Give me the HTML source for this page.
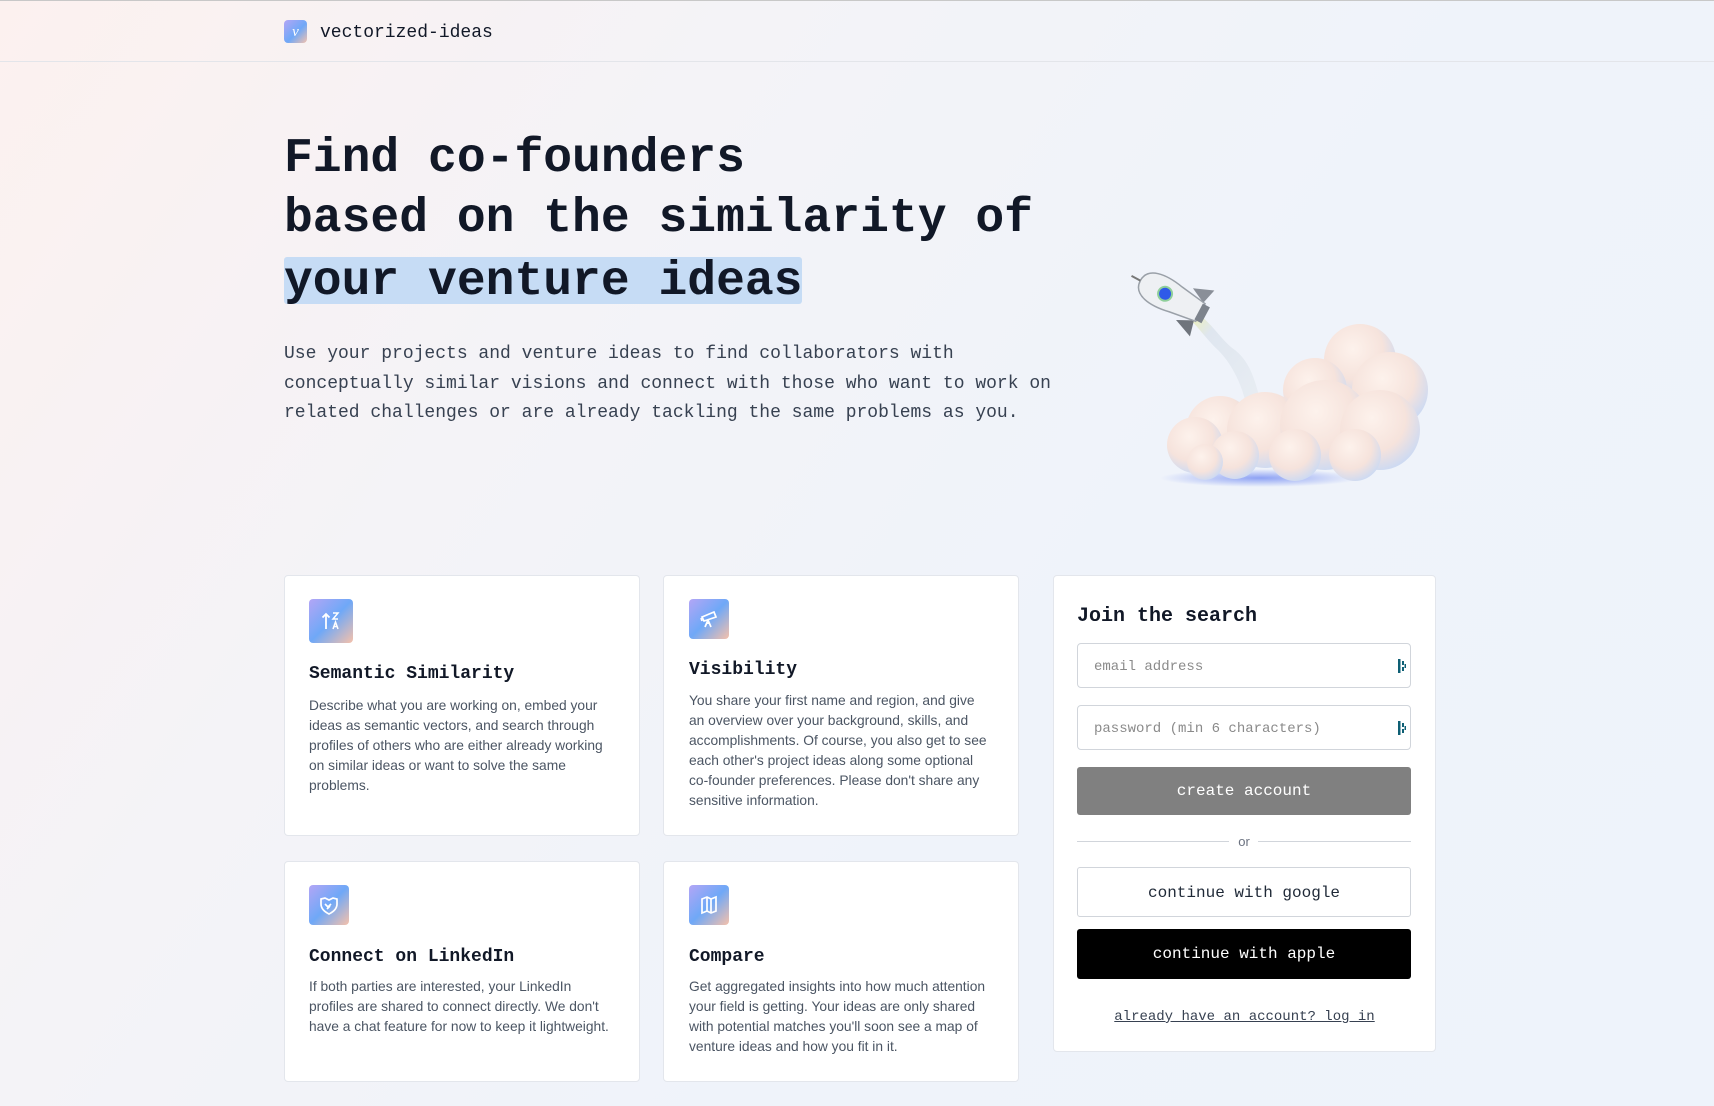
<!DOCTYPE html>
<html><head><meta charset="utf-8">
<style>
*{margin:0;padding:0;box-sizing:border-box}
html,body{width:1714px;height:1106px;overflow:hidden}
body{position:relative;font-family:"Liberation Mono",monospace;color:#111827;
background:linear-gradient(125deg,#fcf1ef 0%,#f4f3f7 30%,#eff3fa 60%,#eef3fb 100%);}
.abs{position:absolute}
.topline{left:0;top:0;width:1714px;height:1px;background:#c8c8c8}
.hdr{left:0;top:61px;width:1714px;height:1px;background:#e3e5ea}
.logo{left:284px;top:20px;width:23px;height:23px;border-radius:4px;background:linear-gradient(135deg,#b3a6f6,#6fa8f7 55%,#f4c2ad);color:#fff;font:italic 15px "Liberation Serif",serif;text-align:center;line-height:24px}
.brand{left:320px;top:20px;font-size:18px;line-height:26px;color:#111827}
.h1{left:284px;font-weight:bold;font-size:48px;line-height:60px;color:#111827;white-space:pre}
.hl{left:284px;top:257px;width:518px;height:47px;background:#c6dcf5;border-radius:3px}
.p{left:284px;top:340px;font-size:18px;line-height:29.5px;color:#374151;white-space:pre}
.card{background:#fff;border:1px solid #e3e6ec;border-radius:4px}
.ic{border-radius:4px;background:linear-gradient(135deg,#b3a6f6 0%,#6fa8f7 50%,#f6c1aa 100%);display:flex;align-items:center;justify-content:center}
.ct{font-size:18px;font-weight:bold;color:#111827;line-height:22px;white-space:pre}
.cb{font-family:"Liberation Sans",sans-serif;font-size:13.8px;line-height:20px;color:#4b5563}
.inp{left:1077px;width:334px;height:45px;border:1px solid #d1d5db;border-radius:4px;background:#fff;font-size:14px;color:#8a8a8a;padding-left:16px;line-height:46px}
.pm{position:absolute;right:4px;top:15px;width:8px;height:14px}
.btn{left:1077px;width:334px;border-radius:3px;text-align:center;font-size:16px}
</style></head><body>
<div class="abs topline"></div>
<div class="abs logo">ν</div>
<div class="abs brand">vectorized-ideas</div>
<div class="abs hdr"></div>

<div class="abs hl"></div>
<div class="abs h1" style="top:129px">Find co-founders</div>
<div class="abs h1" style="top:189px">based on the similarity of</div>
<div class="abs h1" style="top:252px">your venture ideas</div>
<div class="abs p">Use your projects and venture ideas to find collaborators with
conceptually similar visions and connect with those who want to work on
related challenges or are already tackling the same problems as you.</div>

<svg class="abs" style="left:1110px;top:250px" width="330" height="250" viewBox="0 0 330 250">
<defs>
<radialGradient id="cl" cx="40%" cy="35%" r="70%"><stop offset="0" stop-color="#fdf2ec"/><stop offset=".6" stop-color="#f6e3dc"/><stop offset="1" stop-color="#c9d9f4"/></radialGradient>
<radialGradient id="sh" cx="50%" cy="50%" r="50%"><stop offset="0" stop-color="#4d6cf0" stop-opacity=".6"/><stop offset="1" stop-color="#4d6cf0" stop-opacity="0"/></radialGradient>
<linearGradient id="tr" x1="0" y1="0" x2="1" y2="1"><stop offset="0" stop-color="#f4f6a0"/><stop offset=".3" stop-color="#dfe6ef"/><stop offset="1" stop-color="#e8edf3"/></linearGradient>
</defs>
<ellipse cx="150" cy="228" rx="100" ry="9" fill="url(#sh)"/>
<path d="M78 58 C100 68 110 90 125 100 C140 112 145 130 150 150 L135 150 C130 130 120 112 108 100 C95 88 85 72 74 64Z" fill="url(#tr)"/>
<g fill="url(#cl)">
<circle cx="250" cy="110" r="36"/><circle cx="280" cy="140" r="38"/><circle cx="205" cy="140" r="32"/>
<circle cx="110" cy="180" r="34"/><circle cx="85" cy="195" r="28"/><circle cx="155" cy="180" r="38"/>
<circle cx="215" cy="175" r="45"/><circle cx="270" cy="180" r="40"/><circle cx="125" cy="205" r="24"/>
<circle cx="185" cy="205" r="26"/><circle cx="95" cy="212" r="18"/><circle cx="245" cy="205" r="26"/>
</g>
<g transform="translate(48,40) rotate(28)">
<path d="M30 -18 L50 -26 L46 -10Z" fill="#8a8f98"/>
<path d="M30 18 L50 26 L46 10Z" fill="#6f747c"/>
<path d="M-20 0 C-20 -16 0 -18 20 -14 L48 -10 L48 10 L20 14 C0 18 -20 16 -20 0Z" fill="#eef0f3" stroke="#9aa0a8" stroke-width="1.5"/>
<rect x="46" y="-9" width="8" height="18" fill="#7d838c"/>
<circle cx="8" cy="0" r="7" fill="#2f5ae8" stroke="#8fcf9a" stroke-width="2"/>
<line x1="-20" y1="0" x2="-30" y2="0" stroke="#777" stroke-width="2"/>
</g>
</svg>

<div class="abs card" style="left:284px;top:575px;width:356px;height:261px"></div>
<div class="abs ic" style="left:309px;top:599px;width:44px;height:44px">
<svg width="22" height="22" viewBox="0 0 22 22" fill="none" stroke="#fff" stroke-width="1.8"><path d="M6 19V4M2.5 7.5L6 4l3.5 3.5"/><path d="M13 3h5l-5 6h5M13 19l2.5-7 2.5 7M14 16.5h3" stroke-width="1.5"/></svg></div>
<div class="abs ct" style="left:309px;top:663px">Semantic Similarity</div>
<div class="abs cb" style="left:309px;top:696px;width:300px">Describe what you are working on, embed your ideas as semantic vectors, and search through profiles of others who are either already working on similar ideas or want to solve the same problems.</div>

<div class="abs card" style="left:663px;top:575px;width:356px;height:261px"></div>
<div class="abs ic" style="left:689px;top:599px;width:40px;height:40px">
<svg width="22" height="22" viewBox="0 0 22 22" fill="none" stroke="#fff" stroke-width="1.7"><path d="M4 9l12-5 2 5-12 4z"/><path d="M3 10l1 3"/><path d="M10 12l-3 7M10 12l3 7M10 12v4"/></svg></div>
<div class="abs ct" style="left:689px;top:659px">Visibility</div>
<div class="abs cb" style="left:689px;top:691px;width:300px">You share your first name and region, and give an overview over your background, skills, and accomplishments. Of course, you also get to see each other's project ideas along some optional co-founder preferences. Please don't share any sensitive information.</div>

<div class="abs card" style="left:284px;top:861px;width:356px;height:221px"></div>
<div class="abs ic" style="left:309px;top:885px;width:40px;height:40px">
<svg width="22" height="22" viewBox="0 0 22 22" fill="none" stroke="#fff" stroke-width="1.7"><path d="M3 5l4-1 4 2 4-2 4 1v5c0 5-4 8-8 10-4-2-8-5-8-10z"/><path d="M7 10l3 3 3-3M9 15l3-3"/></svg></div>
<div class="abs ct" style="left:309px;top:946px">Connect on LinkedIn</div>
<div class="abs cb" style="left:309px;top:977px;width:305px">If both parties are interested, your LinkedIn profiles are shared to connect directly. We don't have a chat feature for now to keep it lightweight.</div>

<div class="abs card" style="left:663px;top:861px;width:356px;height:221px"></div>
<div class="abs ic" style="left:689px;top:885px;width:40px;height:40px">
<svg width="22" height="22" viewBox="0 0 22 22" fill="none" stroke="#fff" stroke-width="1.7"><path d="M4 5l5-2 4 2 5-2v14l-5 2-4-2-5 2z"/><path d="M9 3v14M13 5v14"/></svg></div>
<div class="abs ct" style="left:689px;top:946px">Compare</div>
<div class="abs cb" style="left:689px;top:977px;width:305px">Get aggregated insights into how much attention your field is getting. Your ideas are only shared with potential matches you'll soon see a map of venture ideas and how you fit in it.</div>

<div class="abs card" style="left:1053px;top:575px;width:383px;height:477px"></div>
<div class="abs" style="left:1077px;top:605px;font-size:20px;font-weight:bold;line-height:24px">Join the search</div>
<div class="abs inp" style="top:643px">email address
<svg class="pm" viewBox="0 0 8 14"><rect x="0" y="0" width="2.5" height="14" fill="#0e5f74"/><rect x="4" y="2" width="2" height="4" fill="#0e5f74"/><rect x="4" y="8" width="2" height="4" fill="#0e5f74"/><rect x="6.5" y="5" width="1.5" height="4" fill="#0e5f74"/></svg></div>
<div class="abs inp" style="top:705px">password (min 6 characters)
<svg class="pm" viewBox="0 0 8 14"><rect x="0" y="0" width="2.5" height="14" fill="#0e5f74"/><rect x="4" y="2" width="2" height="4" fill="#0e5f74"/><rect x="4" y="8" width="2" height="4" fill="#0e5f74"/><rect x="6.5" y="5" width="1.5" height="4" fill="#0e5f74"/></svg></div>
<div class="abs btn" style="top:767px;height:48px;line-height:49px;background:#808080;color:#fff">create account</div>
<div class="abs" style="left:1077px;top:841px;width:152px;height:1px;background:#d1d5db"></div>
<div class="abs" style="left:1258px;top:841px;width:153px;height:1px;background:#d1d5db"></div>
<div class="abs" style="left:1230px;top:834px;width:28px;text-align:center;font:13px/16px 'Liberation Sans',sans-serif;color:#6b7280">or</div>
<div class="abs btn" style="top:867px;height:50px;line-height:50px;background:#fff;border:1px solid #d1d5db;color:#1f2937">continue with google</div>
<div class="abs btn" style="top:929px;height:50px;line-height:51px;background:#000;color:#fff">continue with apple</div>
<div class="abs" style="left:1053px;top:1008px;width:383px;text-align:center;font-size:14px;line-height:18px;color:#374151;text-decoration:underline">already have an account? log in</div>
</body></html>
